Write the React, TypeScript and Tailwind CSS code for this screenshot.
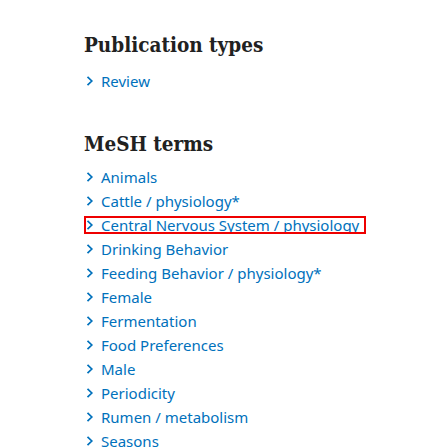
const MESH = [
  'Animals',
  'Cattle / physiology*',
  'Central Nervous System / physiology',
  'Drinking Behavior',
  'Feeding Behavior / physiology*',
  'Female',
  'Fermentation',
  'Food Preferences',
  'Male',
  'Periodicity',
  'Rumen / metabolism',
  'Seasons',
];

const headingFont = { fontFamily: '"DejaVu Serif Condensed", "DejaVu Serif", serif', fontStretch: 'condensed' };

function Chevron() {
  return (
    <svg width="8" height="12" viewBox="0 0 8 12" className="shrink-0">
      <path d="M1.5 1.8 L5.8 6 L1.5 10.2" fill="none" stroke="#0071bc" strokeWidth="1.7" />
    </svg>
  );
}

function Term({ label, focused }: { label: string; focused?: boolean }) {
  return (
    <li className="flex items-center h-6 whitespace-nowrap">
      <div
        className={`flex items-center gap-[7px] pl-[2px] h-[18px] ${
          focused ? 'outline-2 outline-[#e00] -outline-offset-2 overflow-hidden w-[282px]' : ''
        }`}
      >
        <Chevron />
        <span className="shrink-0 text-[15px] leading-[17px] text-[#0071bc]">{label}</span>
      </div>
    </li>
  );
}

export default function App() {
  return (
    <div className="w-[448px] h-[448px] overflow-hidden bg-white pl-[84px] pt-[30px]" style={{ fontFamily: '"Noto Sans", sans-serif' }}>
      <h2 className="text-[20.5px] font-bold text-[#212121] leading-7 pt-px" style={headingFont}>
        Publication types
      </h2>
      <ul className="mt-[10px]">
        <Term label="Review" />
      </ul>
      <h2 className="mt-[37px] text-[20.5px] font-bold text-[#212121] leading-7" style={headingFont}>
        MeSH terms
      </h2>
      <ul className="mt-[7px]">
        {MESH.map((m) => (
          <Term key={m} label={m} focused={m.startsWith('Central')} />
        ))}
      </ul>
    </div>
  );
}
